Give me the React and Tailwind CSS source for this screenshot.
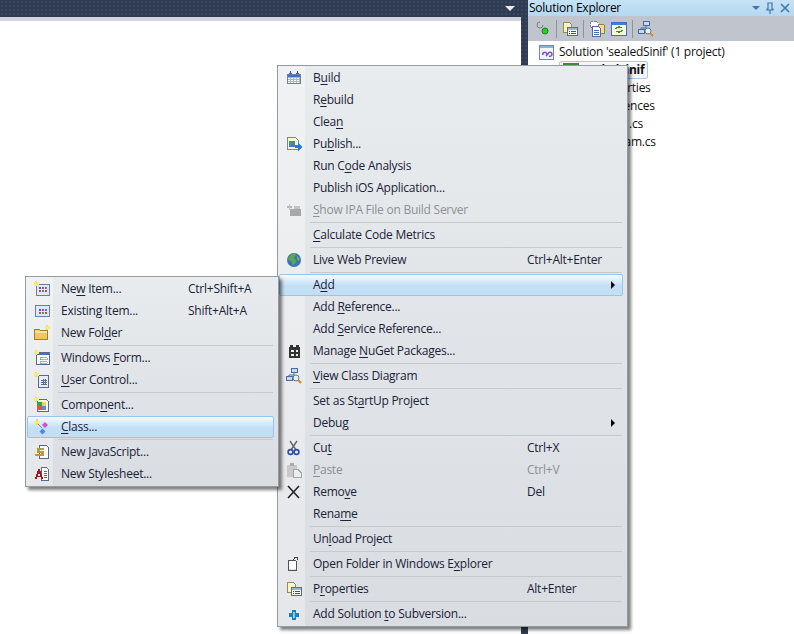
import { Fragment } from 'react'

const font = { fontFamily: '"Open Sans", "Noto Sans", sans-serif' }

// '&' marks the access key letter
function Label({ text }) {
  const i = text.indexOf('&')
  if (i < 0) return text
  return (
    <>
      {text.slice(0, i)}
      <u className="underline-offset-[2px]">{text[i + 1]}</u>
      {text.slice(i + 2)}
    </>
  )
}

function Svg({ children }) {
  return (
    <svg width="16" height="16" viewBox="0 0 16 16" shapeRendering="crispEdges">
      {children}
    </svg>
  )
}

function Spark({ x = 0, y = 0 }) {
  return (
    <g>
      <rect x={x + 1} y={y} width="2" height="5" fill="#f7d94c" />
      <rect x={x} y={y + 1} width="5" height="3" fill="#fbe97a" />
    </g>
  )
}

function Dots() {
  return (
    <g>
      <rect x="5" y="6" width="2" height="2" fill="#5a4fcf" />
      <rect x="8" y="6" width="2" height="2" fill="#c0407a" />
      <rect x="11" y="6" width="2" height="2" fill="#3f7fd0" />
      <rect x="5" y="9" width="2" height="2" fill="#d04a30" />
      <rect x="8" y="9" width="2" height="2" fill="#3aa040" />
      <rect x="11" y="9" width="2" height="2" fill="#d04a30" />
    </g>
  )
}

const icons = {
  build: (
    <Svg>
      <rect x="1.5" y="4.5" width="13" height="9" fill="#fff" stroke="#6b7fa8" />
      <path d="M2 7h12M2 9h12M2 11h12M4 5v8M7 5v8M10 5v8M13 5v8" stroke="#aab4cc" />
      <path d="M4 1v3M3 3h3M11 1v3M10 3h3M4 1l1 1M11 1l1 1" stroke="#2f62c8" />
      <rect x="2" y="5" width="12" height="2" fill="#3a6fd8" />
    </Svg>
  ),
  publish: (
    <Svg>
      <path d="M1.5 1.5h8l3 3v9h-11z" fill="#fdf6d8" stroke="#7d8796" />
      <circle cx="6" cy="8" r="3.5" fill="#3f7fc8" />
      <path d="M4 6h3v2H5v2H4z" fill="#4ea23e" />
      <path d="M9 9h3V6.5L16 11l-4 4v-3H9z" fill="#2f78d8" />
    </Svg>
  ),
  ipa: (
    <Svg>
      <rect x="4" y="7" width="11" height="7" fill="#a8a8a8" />
      <rect x="8" y="4" width="6" height="3" fill="#c2c2c2" />
      <rect x="1" y="4" width="5" height="2" fill="#b5b5b5" />
      <rect x="3" y="2" width="1" height="6" fill="#c4c4c4" />
    </Svg>
  ),
  globe: (
    <svg width="16" height="16" viewBox="0 0 16 16">
      <circle cx="8" cy="8" r="7" fill="#3d73b8" />
      <path d="M5 2c3-1 5 0 5 1S8 5 8 6s2 1 2 3-2 4-3 4-1-3-2-4-3-1-3-2 2-3 3-5z" fill="#5aa84a" />
      <path d="M11 4c2 1 3 3 2 5-1 0-2-1-2-2z" fill="#6cb85a" />
    </svg>
  ),
  nuget: (
    <Svg>
      <rect x="3" y="4" width="11" height="11" fill="#333" />
      <rect x="4" y="2" width="3" height="3" fill="#333" />
      <rect x="10" y="2" width="3" height="3" fill="#333" />
      <rect x="5" y="7" width="3" height="2" fill="#eee" />
      <rect x="10" y="7" width="2" height="2" fill="#eee" />
      <rect x="5" y="11" width="3" height="2" fill="#eee" />
      <rect x="10" y="11" width="2" height="2" fill="#eee" />
    </Svg>
  ),
  diagram: (
    <svg width="16" height="16" viewBox="0 0 16 16">
      <rect x="5.5" y="0.5" width="6" height="4" fill="#c8d8f0" stroke="#4a6a9a" />
      <rect x="0.5" y="8.5" width="6" height="4" fill="#c8d8f0" stroke="#4a6a9a" />
      <path d="M8 5v2H3v2" fill="none" stroke="#4a6a9a" />
      <circle cx="10" cy="10" r="3" fill="#e6f0fa" stroke="#5d7a9a" />
      <path d="M12 12l3 3" stroke="#d98a20" strokeWidth="2" />
    </svg>
  ),
  cut: (
    <svg width="16" height="16" viewBox="0 0 16 16">
      <path d="M4 1l6 9M11 1L5 10" stroke="#5f6670" strokeWidth="1.4" fill="none" />
      <circle cx="4.5" cy="12" r="2.4" fill="none" stroke="#2a4fa8" strokeWidth="1.6" />
      <circle cx="10.5" cy="12" r="2.4" fill="none" stroke="#2a4fa8" strokeWidth="1.6" />
    </svg>
  ),
  paste: (
    <Svg>
      <rect x="1" y="3" width="10" height="12" fill="#c9c9c9" />
      <rect x="4" y="1" width="4" height="3" fill="#a9a9a9" />
      <path d="M7 7.5h5l3 3v4.5H7z" fill="#ececec" stroke="#a5a5a5" />
    </Svg>
  ),
  remove: (
    <svg width="16" height="16" viewBox="0 0 16 16">
      <path d="M2 2l11 12M13 2L2 14" stroke="#222" strokeWidth="1.6" />
    </svg>
  ),
  open: (
    <Svg>
      <path d="M2.5 4.5h7l1 1v9h-8z" fill="#fff" stroke="#555" />
      <path d="M3 13h7v1H3z" fill="#ddd" />
      <path d="M7 4l3-3M8 1h3v3" stroke="#444" fill="none" />
    </Svg>
  ),
  props: (
    <Svg>
      <path d="M1.5 1.5h6l2 2v8h-8z" fill="#fdf2c8" stroke="#9a8a5a" />
      <rect x="5.5" y="6.5" width="10" height="8" fill="#fff" stroke="#5a6a8a" />
      <rect x="6" y="7" width="9" height="2" fill="#9bb4d8" />
      <path d="M7 10h1M9 10h5M7 12h1M9 12h5" stroke="#39527f" />
    </Svg>
  ),
  svn: (
    <Svg>
      <rect x="6" y="4" width="4" height="10" fill="#1f7fb8" />
      <rect x="3" y="7" width="10" height="4" fill="#1f7fb8" />
      <rect x="7" y="6" width="2" height="6" fill="#7fd0f0" />
    </Svg>
  ),
  newItem: (
    <Svg>
      <rect x="2.5" y="3.5" width="13" height="11" fill="#dfe6f5" stroke="#6b7fa8" />
      <Dots />
      <Spark />
    </Svg>
  ),
  existing: (
    <Svg>
      <rect x="1.5" y="2.5" width="14" height="11" fill="#dfe6f5" stroke="#6b7fa8" />
      <Dots />
    </Svg>
  ),
  folder: (
    <Svg>
      <path d="M0.5 4.5h5l1 1h7v9h-13z" fill="#f0c85a" stroke="#9a8040" />
      <rect x="1" y="6" width="12" height="2" fill="#f9e49a" />
      <Spark x={11} y={0} />
    </Svg>
  ),
  form: (
    <Svg>
      <rect x="2.5" y="2.5" width="13" height="12" fill="#f4f6fa" stroke="#5a6a8a" />
      <rect x="3" y="3" width="12" height="2" fill="#3f6fc0" />
      <path d="M6 7.5h7v2H6zM6 11.5h7v1.5H6z" fill="#fff" stroke="#6b7fa8" strokeWidth="0.6" />
      <Spark />
    </Svg>
  ),
  control: (
    <Svg>
      <rect x="4.5" y="3.5" width="10" height="12" fill="#e6ecf8" stroke="#5a6a8a" />
      <path d="M7 8h6M7 10h6M7 12h6M9 7v6M11 7v6" stroke="#5a6a8a" />
      <Spark />
    </Svg>
  ),
  component: (
    <Svg>
      <path d="M3.5 2.5h9l2 2v10h-11z" fill="#f4f6fa" stroke="#5a6a8a" />
      <rect x="3" y="5" width="5" height="4" fill="#3aa040" />
      <rect x="8" y="5" width="4" height="4" fill="#f0d060" />
      <rect x="3" y="9" width="5" height="4" fill="#d05a50" />
      <rect x="8" y="9" width="4" height="4" fill="#5a8ad8" />
      <Spark />
    </Svg>
  ),
  cls: (
    <svg width="16" height="16" viewBox="0 0 16 16">
      <path d="M4 5l4 4" stroke="#8a8a9a" />
      <path d="M11 3l3 3-3 3-3-3z" fill="#d050d0" />
      <path d="M8.5 9.5l3 3-3 3-3-3z" fill="#4a8ae0" />
      <rect x="2" y="0" width="2" height="6" fill="#f7d94c" />
      <rect x="0" y="2" width="6" height="2" fill="#fbe97a" />
    </svg>
  ),
  js: (
    <Svg>
      <path d="M5.5 1.5h7l2 2v11h-9z" fill="#fff" stroke="#5a6a8a" />
      <path d="M3 4h7v2H6v1h4v5H1v-2h6V9H3z" fill="#b89a40" />
    </Svg>
  ),
  css: (
    <Svg>
      <path d="M7.5 1.5h5l2 2v11h-7z" fill="#fff" stroke="#5a6a8a" />
      <path d="M10 5h3M10 7h3M10 9h3M10 11h3" stroke="#3f6fc0" />
      <path d="M1 13L4 3h2l3 10H7l-.6-2H3.600L3 13zM4 9.500h2L5 6z" fill="#a01818" />
    </Svg>
  ),
}

const mainItems = [
  { label: 'B&uild', icon: 'build' },
  { label: 'R&ebuild' },
  { label: 'Clea&n' },
  { label: 'Pu&blish...', icon: 'publish' },
  { label: 'Run C&ode Analysis' },
  { label: 'Publish iOS Application...' },
  { label: '&Show IPA File on Build Server', icon: 'ipa', disabled: true },
  'sep',
  { label: '&Calculate Code Metrics' },
  'sep',
  { label: 'Live Web Preview', icon: 'globe', keys: 'Ctrl+Alt+Enter' },
  'sep',
  { label: 'A&dd', active: true, arrow: true },
  { label: 'Add &Reference...' },
  { label: 'Add &Service Reference...' },
  { label: 'Manage &NuGet Packages...', icon: 'nuget' },
  'sep',
  { label: '&View Class Diagram', icon: 'diagram' },
  'sep',
  { label: 'Set as St&artUp Project' },
  { label: 'Debu&g', arrow: true },
  'sep',
  { label: 'Cu&t', icon: 'cut', keys: 'Ctrl+X' },
  { label: '&Paste', icon: 'paste', keys: 'Ctrl+V', disabled: true },
  { label: 'Remo&ve', icon: 'remove', keys: 'Del' },
  { label: 'Rena&me' },
  'sep',
  { label: 'Un&load Project' },
  'sep',
  { label: 'Open Folder in Windows E&xplorer', icon: 'open' },
  'sep',
  { label: 'P&roperties', icon: 'props', keys: 'Alt+Enter' },
  'sep',
  { label: 'Add Solution &to Subversion...', icon: 'svn' },
]

const addItems = [
  { label: 'Ne&w Item...', icon: 'newItem', keys: 'Ctrl+Shift+A' },
  { label: 'Existin&g Item...', icon: 'existing', keys: 'Shift+Alt+A' },
  { label: 'New Fol&der', icon: 'folder' },
  'sep',
  { label: 'Windows &Form...', icon: 'form' },
  { label: '&User Control...', icon: 'control' },
  'sep',
  { label: 'Compo&nent...', icon: 'component' },
  { label: '&Class...', icon: 'cls', active: true },
  'sep',
  { label: 'New JavaScript...', icon: 'js' },
  { label: 'New Stylesheet...', icon: 'css' },
]

function Menu({ items, className, keysWidth }) {
  return (
    <div
      className={`absolute border border-[#979ba0] p-px shadow-[3px_3px_3px_rgba(0,0,0,0.5)] bg-[linear-gradient(to_right,rgba(255,255,255,0.3)_27px,transparent_27px),linear-gradient(180deg,#e9ecee,#d9dce1)] ${className}`}
    >
      {items.map((item, i) =>
        item === 'sep' ? (
          <div key={i} className="h-[3px] flex items-center pl-[31px] pr-[4px]">
            <div className="h-px w-full bg-[#c6c9cd]" />
          </div>
        ) : (
          <div
            key={i}
            className={`flex items-center h-[22px] rounded-[2px] border mr-[3px] ${
              item.active
                ? 'border-[#98c5ea] bg-[linear-gradient(180deg,#f5fafe,#c3dff6_55%)]'
                : 'border-transparent'
            } ${item.disabled ? 'text-[#8c9095]' : 'text-[#1a2238]'}`}
          >
            <div className="w-[27px] shrink-0 flex items-center justify-center">
              {item.icon && icons[item.icon]}
            </div>
            <div className="flex-1 pl-[6px] whitespace-nowrap">
              <Label text={item.label} />
            </div>
            {item.keys && (
              <div className="shrink-0 whitespace-nowrap" style={{ width: keysWidth }}>
                {item.keys}
              </div>
            )}
            {item.arrow && (
              <div className="mr-[7px] w-0 h-0 border-y-[4px] border-y-transparent border-l-[4px] border-l-black" />
            )}
          </div>
        )
      )}
    </div>
  )
}

function ToolSep() {
  return <div className="w-px h-[18px] bg-[#8d929c] mx-[5px]" />
}

const treeRows = [
  { label: 'Properties', pad: 67 },
  { label: 'References', pad: 67 },
  { label: 'Class1.cs', pad: 67 },
  { label: 'Program.cs', pad: 67 },
]

export default function App() {
  return (
    <div
      className="relative w-[794px] h-[634px] overflow-hidden flex text-[12px] tracking-[-0.25px] bg-[#2e3b52] bg-[radial-gradient(#3b4860_1px,transparent_1px)] bg-[length:4px_4px]"
      style={font}
    >
      {/* editor area */}
      <div className="w-[521px] flex flex-col">
        <div className="h-[17px] flex justify-end items-center pr-[6px]">
          <div className="w-0 h-0 border-x-[5px] border-x-transparent border-t-[5px] border-t-[#e8ebf0] mr-[0px]" />
        </div>
        <div className="h-[4px] bg-[#ced4dd]" />
        <div className="flex-1 bg-white" />
      </div>

      {/* solution explorer */}
      <div className="ml-[7px] flex-1 flex flex-col bg-white">
        <div className="h-[16px] flex items-center justify-between pl-[1px] pr-[4px] bg-[linear-gradient(180deg,#c6e2f6,#b5d8f0)] text-black">
          <span>Solution Explorer</span>
          <div className="flex items-center gap-[5px] text-[#3f78a8]">
            <div className="w-0 h-0 border-x-[4px] border-x-transparent border-t-[4px] border-t-[#3f78a8]" />
            <svg width="10" height="12" viewBox="0 0 10 12">
              <path d="M3 1h4v6h1v1H2V7h1zM5 8v4" fill="none" stroke="#3f78a8" strokeWidth="1.2" />
            </svg>
            <svg width="10" height="10" viewBox="0 0 10 10">
              <path d="M1 1l8 8M9 1L1 9" stroke="#3f78a8" strokeWidth="1.6" />
            </svg>
          </div>
        </div>
        <div className="h-[25px] flex items-center pl-[7px] bg-[#c0c4cd]">
          <svg width="16" height="16" viewBox="0 0 16 16">
            <path d="M5 1a3 3 0 1 0 3 3" fill="none" stroke="#7b8088" />
            <circle cx="10" cy="10" r="3" fill="#2fc82f" stroke="#118811" />
          </svg>
          <ToolSep />
          <div className="flex">{icons.props}</div>
          <ToolSep />
          <div className="flex">
            <Svg>
              <path d="M1.500 0.500h6l2 2v4h-8z" fill="#fff" stroke="#888" strokeDasharray="2 1" />
              <path d="M9 3h5l1 1v8H9z" fill="#f5dd90" stroke="#9a8040" />
              <path d="M3.500 5.500h6l2 2v8h-8z" fill="#fff" stroke="#5a6a8a" />
              <path d="M5 9h5M5 11h5M5 13h5" stroke="#3f6fc0" />
            </Svg>
          </div>
          <div className="flex ml-[6px]">
            <Svg>
              <rect x="0.500" y="1.500" width="15" height="13" fill="#fdf6d8" stroke="#3f6fc0" />
              <rect x="1" y="2" width="14" height="2" fill="#3f7fd0" />
              <path d="M5 8a3 3 0 0 1 5-1M11 9a3 3 0 0 1-5 1" fill="none" stroke="#2f9a20" strokeWidth="1.500" />
            </Svg>
          </div>
          <ToolSep />
          <div className="flex">{icons.diagram}</div>
        </div>
        <div className="flex-1 flex flex-col pt-[1px] text-[#101010]">
          <div className="h-[18px] flex items-center pl-[11px] gap-[5px] mt-[1px]">
            <svg width="15" height="15" viewBox="0 0 15 15">
              <rect x="0.500" y="0.500" width="14" height="14" fill="#f2f6fc" stroke="#6d87ad" />
              <rect x="1" y="1" width="13" height="2" fill="#8fb0dc" />
              <path d="M4 10a2 2 0 1 1 3 1l2-2a2 2 0 1 1 1 2" fill="none" stroke="#7a52c8" strokeWidth="1.500" />
            </svg>
            <span>Solution 'sealedSinif' (1 project)</span>
          </div>
          <div className="h-[18px] flex items-center pl-[31px]">
            <div className="border border-[#a9c9e8] rounded-[2px] px-[3px] h-[18px] flex items-center font-bold bg-[#f4f8fc]">
              <span className="w-[16px] h-[14px] bg-[#3d8a3d] mr-[3px]" />
              sealedSinif
            </div>
          </div>
          {treeRows.map(row => (
            <div key={row.label} className="h-[18px] flex items-center" style={{ paddingLeft: row.pad }}>
              {row.label}
            </div>
          ))}
        </div>
      </div>

      <Menu items={mainItems} keysWidth={95} className="left-[277px] top-[65px] w-[351px]" />
      <Menu items={addItems} keysWidth={85} className="left-[25px] top-[276px] w-[254px]" />
    </div>
  )
}
